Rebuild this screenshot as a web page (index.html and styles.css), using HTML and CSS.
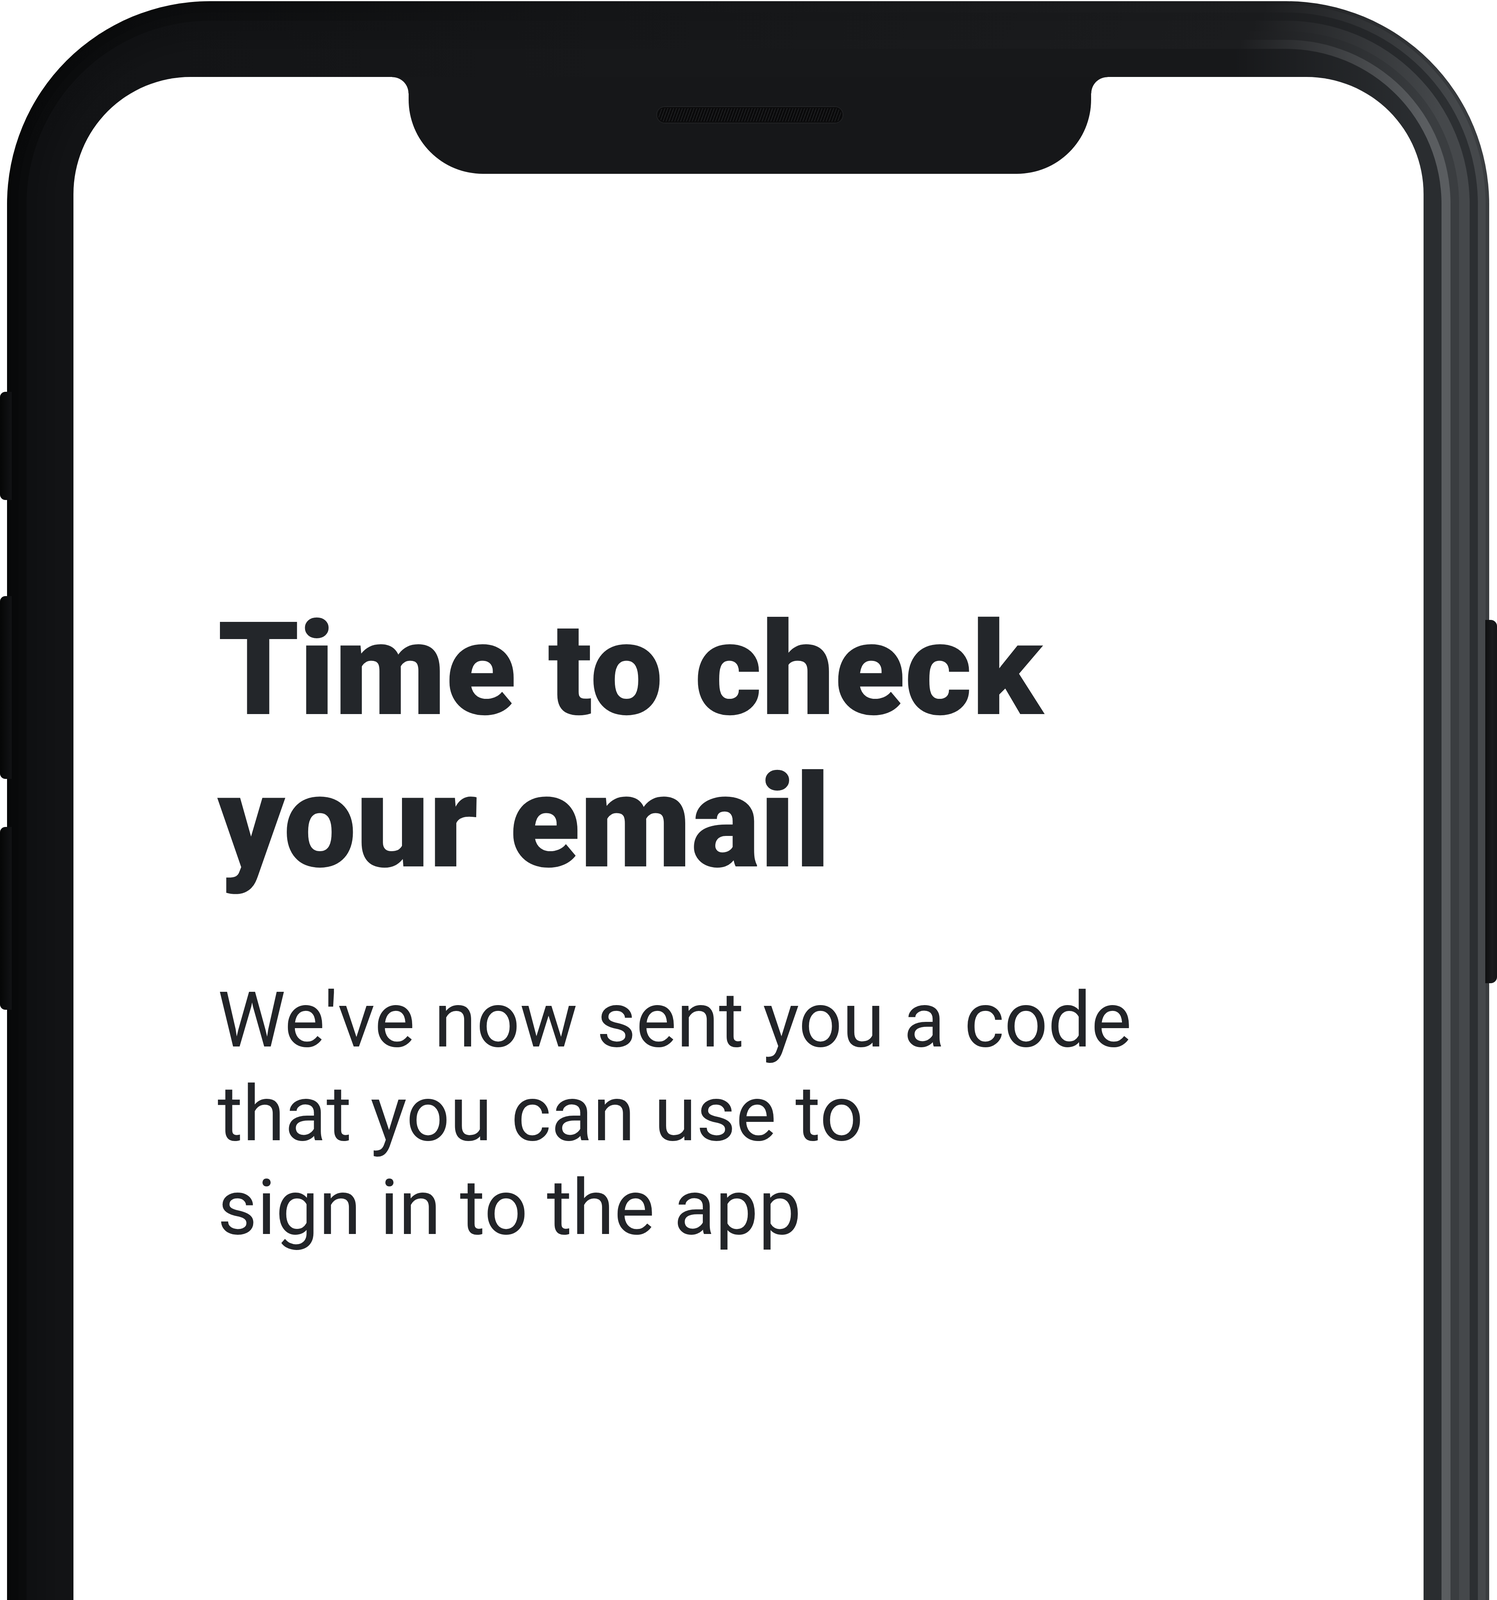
FILE: index.html
```html
<!DOCTYPE html>
<html lang="en">
<head>
    <meta charset="UTF-8">
    <meta name="viewport" content="width=device-width, initial-scale=1.0">
    <title>Check your email</title>
    <link rel="stylesheet" href="styles.css">
</head>
<body>

<div class="device">
    <!-- Hardware buttons -->
    <span class="side-btn mute"></span>
    <span class="side-btn vol-up"></span>
    <span class="side-btn vol-down"></span>
    <span class="side-btn power"></span>

    <div class="rim rim-1">
        <div class="rim rim-2">
            <div class="rim rim-3">
                <div class="rim rim-4">
                    <div class="rim rim-5">
                        <div class="bezel">
                            <main class="screen">
                                <div class="notch"><span class="speaker"></span></div>

                                <section class="intro">
                                    <h1>Time to check<br>your email</h1>
                                    <p class="lead">We've now sent you a code<br>that you can use to<br>sign in to the app</p>
                                </section>

                                <form class="code-form" id="codeForm">
                                    <input type="text" class="code-input" id="code" name="code" placeholder="Code from your email">
                                    <button type="submit" class="login-btn">Login</button>
                                </form>

                                <div class="home-bar"></div>
                            </main>
                        </div>
                    </div>
                </div>
            </div>
        </div>
    </div>

    <span class="port"></span>
</div>

</body>
</html>
```

FILE: styles.css
```css
html {
    overflow: hidden;
}

body {
    margin: 0;
    padding: 3px 0 0 18px;
    background-color: #ffffff;
    font-family: Roboto, "Liberation Sans", sans-serif;
    color: #23262a;
}

/* Phone frame */
.device {
    position: relative;
    box-sizing: border-box;
    width: 3794px;
    padding: 9px;
    border-radius: 520px;
    background: linear-gradient(90deg, #070808 0%, #131416 40%, #1b1c1e 85%, #3a3d40 99%);
}

.rim-1 {
    padding: 20px;
    border-radius: 511px;
    background: linear-gradient(90deg, #08090a 0%, #141517 40%, #1c1d1f 85%, #45484b 98%);
}

.rim-2 {
    padding: 21px;
    border-radius: 491px;
    background: linear-gradient(90deg, #0a0b0c 0%, #141517 40%, #1a1b1d 85%, #2c2f32 98%);
}

.rim-3 {
    padding: 27px;
    border-radius: 470px;
    background: linear-gradient(90deg, #0f1012 0%, #151618 40%, #1b1c1e 85%, #45484b 98%);
}

.rim-4 {
    padding: 22px;
    border-radius: 443px;
    background: linear-gradient(90deg, #101113 0%, #151618 40%, #1b1c1e 85%, #3a3d40 98%);
}

.rim-5 {
    padding: 23px;
    border-radius: 421px;
    background: linear-gradient(90deg, #111214 0%, #161719 40%, #1c1d1f 85%, #5a5d60 98%);
}

.bezel {
    padding: 72px 46px 76px 48px;
    border-radius: 398px;
    background: linear-gradient(90deg, #121315 0%, #17181a 40%, #17181a 85%, #2a2d30 98%);
}

.side-btn {
    position: absolute;
    width: 30px;
}

.mute, .vol-up, .vol-down {
    left: -18px;
    border-radius: 14px 0 0 14px;
    background: linear-gradient(90deg, #050606, #121315);
}

.mute {
    top: 1000px;
    height: 277px;
}

.vol-up {
    top: 1523px;
    height: 468px;
}

.vol-down {
    top: 2114px;
    height: 468px;
}

.power {
    right: -20px;
    top: 1584px;
    height: 930px;
    border-radius: 0 16px 16px 0;
    background: linear-gradient(90deg, #0e0f10, #1a1b1d 60%, #141517);
}

.port {
    position: absolute;
    bottom: 0;
    left: 1557px;
    width: 410px;
    height: 15px;
    border-radius: 30px 30px 0 0;
    background-color: #ffffff;
}

/* Screen */
.screen {
    position: relative;
    box-sizing: border-box;
    height: 7414px;
    padding: 0 369px 5px;
    border-radius: 300px;
    background-color: #ffffff;
    display: flex;
    flex-direction: column;
}

.notch {
    position: absolute;
    top: 0;
    left: 50%;
    width: 1747px;
    height: 248px;
    margin-left: -870px;
    border-radius: 0 0 190px 190px;
    background-color: #161719;
    display: flex;
    justify-content: center;
}

.notch::before, .notch::after {
    content: "";
    position: absolute;
    top: 0;
    width: 42px;
    height: 42px;
}

.notch::before {
    left: -42px;
    background: radial-gradient(circle at 0 100%, transparent 41px, #161719 42px);
}

.notch::after {
    right: -42px;
    background: radial-gradient(circle at 100% 100%, transparent 41px, #161719 42px);
}

.speaker {
    margin-top: 77px;
    width: 475px;
    height: 40px;
    border-radius: 20px;
    background: repeating-linear-gradient(110deg, #0a0a0b 0 5px, #1f2022 5px 7px);
    box-shadow: inset 0 0 0 3px #0c0c0d, 0 0 0 2px #222325;
}

.intro {
    padding-top: 1323px;
}

.intro h1 {
    margin: 0;
    font-size: 332px;
    line-height: 390px;
    font-weight: 900;
    letter-spacing: -1px;
    color: #23262a;
}

.lead {
    margin: 192px 0 0;
    font-size: 196px;
    line-height: 240px;
    color: #222428;
}

.code-form {
    margin-top: auto;
    display: flex;
    flex-direction: column;
    gap: 109px;
}

.code-input {
    box-sizing: border-box;
    width: 100%;
    height: 442px;
    padding: 0 141px;
    border: none;
    border-radius: 74px;
    outline: none;
    background-color: #e4e4e4;
    font-family: Roboto, "Liberation Sans", sans-serif;
    font-size: 142px;
    color: #23262a;
}

.code-input::placeholder {
    color: #8b8b8b;
}

.login-btn {
    box-sizing: border-box;
    width: 100%;
    height: 410px;
    border: 8px solid #23262a;
    border-radius: 74px;
    background-color: #ffffff;
    font-family: Roboto, "Liberation Sans", sans-serif;
    font-size: 163px;
    font-weight: 500;
    color: #23262a;
    cursor: pointer;
}

.home-bar {
    margin: 81px auto 0;
    width: 1238px;
    height: 45px;
    border-radius: 23px;
    background-color: #000000;
}
```
